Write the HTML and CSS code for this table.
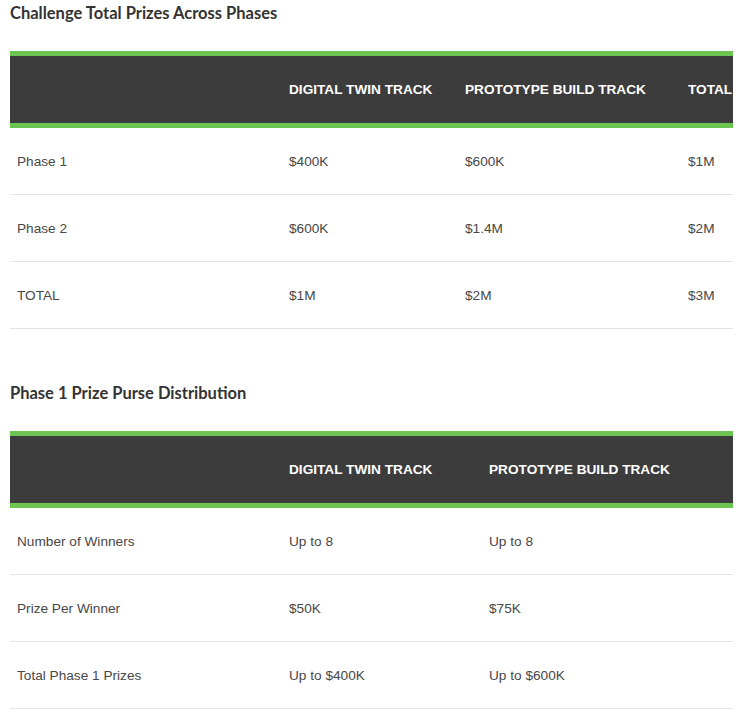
FILE: index.html
```html
<!DOCTYPE html>
<html>
<head>
<meta charset="utf-8">
<link rel="stylesheet" href="styles.css">
</head>
<body>
<section class="block">
  <h2 class="title">Challenge Total Prizes Across Phases</h2>
  <div class="scroller">
    <table class="prize t1">
      <colgroup><col class="c1"><col class="c2"><col class="c3"><col class="c4"></colgroup>
      <thead>
        <tr><th></th><th>Digital Twin Track</th><th>Prototype Build Track</th><th>Total</th></tr>
      </thead>
      <tbody>
        <tr><td>Phase 1</td><td>$400K</td><td>$600K</td><td>$1M</td></tr>
        <tr><td>Phase 2</td><td>$600K</td><td>$1.4M</td><td>$2M</td></tr>
        <tr><td>TOTAL</td><td>$1M</td><td>$2M</td><td>$3M</td></tr>
      </tbody>
    </table>
  </div>
</section>
<section class="block second">
  <h2 class="title">Phase 1 Prize Purse Distribution</h2>
  <div class="scroller">
    <table class="prize t2">
      <colgroup><col class="d1"><col class="d2"><col class="d3"></colgroup>
      <thead>
        <tr><th></th><th>Digital Twin Track</th><th>Prototype Build Track</th></tr>
      </thead>
      <tbody>
        <tr><td>Number of Winners</td><td>Up to 8</td><td>Up to 8</td></tr>
        <tr><td>Prize Per Winner</td><td>$50K</td><td>$75K</td></tr>
        <tr><td>Total Phase 1 Prizes</td><td>Up to $400K</td><td>Up to $600K</td></tr>
      </tbody>
    </table>
  </div>
</section>
</body>
</html>
```

FILE: styles.css
```css
html, body {
  margin: 0;
  padding: 0;
  background: #ffffff;
}
body {
  padding: 3px 5px 0 10px;
  font-family: "Liberation Sans", Arial, sans-serif;
}
.title {
  margin: 0 0 28px 0;
  font-family: Lato, "Open Sans", sans-serif;
  font-weight: 700;
  font-size: 16.5px;
  line-height: 20px;
  color: #333333;
}
.second {
  margin-top: 54px;
}
.scroller {
  width: 723px;
  overflow: hidden;
}
.prize {
  border-collapse: collapse;
  table-layout: fixed;
  font-size: 13.65px;
  color: #474747;
}
.t1 { width: 780px; }
.t2 { width: 723px; }
.c1 { width: 272px; }
.c2 { width: 176px; }
.c3 { width: 223px; }
.c4 { width: 109px; }
.d1 { width: 272px; }
.d2 { width: 200px; }
.d3 { width: 251px; }
.prize thead tr {
  background: #3c3c3c;
  border-top: 5px solid #6cc551;
  border-bottom: 5px solid #6cc551;
}
.prize th {
  height: 67px;
  padding: 0 7px;
  text-align: left;
  text-transform: uppercase;
  color: #ffffff;
  font-weight: 700;
  font-size: 13.65px;
  white-space: nowrap;
}
.prize td {
  height: 66px;
  padding: 0 7px;
  border-bottom: 1px solid #e4e4e4;
  vertical-align: middle;
  white-space: nowrap;
}
```
